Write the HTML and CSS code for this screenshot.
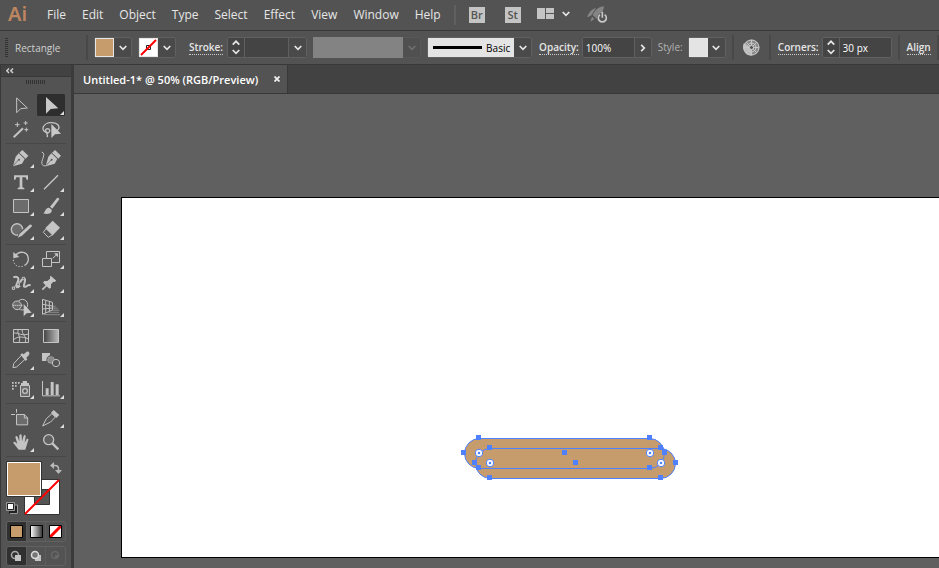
FILE: index.html
```html
<!DOCTYPE html>
<html lang="en">
<head>
<meta charset="utf-8">
<title>Untitled-1* @ 50% (RGB/Preview)</title>
<link rel="stylesheet" href="styles.css">
</head>
<body>
<svg class="defs" aria-hidden="true">
  <symbol id="down" viewBox="0 0 8 6"><path d="M.7 1 4 4.3 7.3 1" fill="none" stroke="currentColor" stroke-width="1.7"/></symbol>
  <symbol id="up" viewBox="0 0 8 6"><path d="M.7 4.6 4 1.3l3.3 3.3" fill="none" stroke="currentColor" stroke-width="1.7"/></symbol>
  <symbol id="next" viewBox="0 0 6 8"><path d="M1.2.8 4.3 4 1.2 7.2" fill="none" stroke="currentColor" stroke-width="1.7"/></symbol>
</svg>

<header class="menubar">
  <span class="brand">Ai</span>
  <nav class="menus">
    <button>File</button><button>Edit</button><button>Object</button><button>Type</button><button>Select</button><button>Effect</button><button>View</button><button>Window</button><button>Help</button>
  </nav>
  <div class="apps">
    <button class="app">Br</button>
    <button class="app">St</button>
    <button class="arrange" aria-label="Arrange documents">
      <svg width="17" height="11" viewBox="0 0 17 11" fill="#c4c4c4"><path d="M0 0h8v11H0zM9 0h8v5H9zM9 6h8v5H9z"/></svg>
      <svg width="8" height="6"><use href="#down"/></svg>
    </button>
    <button class="gpu" aria-label="GPU performance">
      <svg width="21" height="18" viewBox="0 0 63 54"><path d="M51 1C36 2 24 12 17 27l14 13c10-8 18-22 20-39z" fill="#858585"/><path d="M27 6C13 10 5 20 0 34l12-5zM15 32l-5 15 12-8z" fill="#858585"/><circle cx="46" cy="36" r="16" fill="#535353"/><path d="M39 26a12 12 0 1 0 14 0M46 18v17" fill="none" stroke="#c8c8c8" stroke-width="5"/></svg>
    </button>
  </div>
</header>

<section class="controls" aria-label="Control bar">
  <span class="grip"></span>
  <span class="object-type">Rectangle</span>
  <span class="divider"></span>
  <div class="combo fill-combo">
    <button class="swatch tan" aria-label="Fill"></button>
    <button class="chev" aria-label="Fill options"><svg width="8" height="6"><use href="#down"/></svg></button>
  </div>
  <div class="combo">
    <button class="swatch" aria-label="Stroke colour"><svg width="19" height="19" viewBox="0 0 19 19"><path fill="#fff" d="M0 0h19v19H0z"/><path d="M7.500 7.500h4v4h-4z" fill="none" stroke="#222"/><path d="M2 17 17 2" stroke="#f00" stroke-width="2"/></svg></button>
    <button class="chev" aria-label="Stroke colour options"><svg width="8" height="6"><use href="#down"/></svg></button>
  </div>
  <label class="link stroke-label" for="weight">Stroke:</label>
  <div class="combo">
    <button class="spin" aria-label="Step stroke weight"><svg width="8" height="6"><use href="#up"/></svg><svg width="8" height="6"><use href="#down"/></svg></button>
    <input id="weight" class="weight" type="text">
    <button class="chev" aria-label="Weight presets"><svg width="8" height="6"><use href="#down"/></svg></button>
  </div>
  <div class="combo disabled">
    <span class="profile"></span>
    <button class="chev" disabled aria-label="Width profile"><svg width="8" height="6"><use href="#down"/></svg></button>
  </div>
  <div class="combo brush">
    <span class="brush-line"></span>
    <select aria-label="Brush definition"><option>Basic</option></select>
    <span class="chev"><svg width="8" height="6"><use href="#down"/></svg></span>
  </div>
  <label class="link opacity-label" for="opacity">Opacity:</label>
  <div class="combo">
    <input id="opacity" class="value" type="text" value="100%">
    <button class="chev" aria-label="Opacity slider"><svg width="6" height="8"><use href="#next"/></svg></button>
  </div>
  <span class="style-label">Style:</span>
  <div class="combo">
    <button class="swatch pale" aria-label="Graphic style"></button>
    <button class="chev" aria-label="Style options"><svg width="8" height="6"><use href="#down"/></svg></button>
  </div>
  <span class="divider"></span>
  <button class="recolor" aria-label="Recolor artwork"><svg width="17" height="17" viewBox="0 0 17 17"><circle cx="8.500" cy="8.500" r="8" fill="#888"/><path d="M8.500 8.500 1 12a8 8 0 0 0 8 4.500zM8.500 8.500 1 4a8 8 0 0 0 0 8z" fill="#bbb"/><g fill="none" stroke="#c8c8c8"><circle cx="8.500" cy="8.500" r="7.500"/><circle cx="8.500" cy="8.500" r="4.500"/><path d="M8.500 1v15M1 8.500h15M3.200 3.200l10.600 10.600M13.800 3.200 3.200 13.800"/></g><circle cx="8.500" cy="8.500" r="2" fill="#555" stroke="#ccc"/></svg></button>
  <span class="divider"></span>
  <label class="link corners-label" for="corners">Corners:</label>
  <div class="combo">
    <button class="spin" aria-label="Step corner radius"><svg width="8" height="6"><use href="#up"/></svg><svg width="8" height="6"><use href="#down"/></svg></button>
    <input id="corners" class="value" type="text" value="30 px">
  </div>
  <span class="divider"></span>
  <button class="link align">Align</button>
  <span class="divider"></span>
</section>

<main class="workspace">
  <aside class="panel">
    <button class="collapse" aria-label="Collapse panel"><svg width="8" height="6" viewBox="0 0 8 6" fill="none" stroke="#d0d0d0" stroke-width="1.500"><path d="M3 .5.800 2.800 3 5M7 .5 4.800 2.800 7 5"/></svg></button>
    <div class="panel-grip"></div>

    <div class="tools">
      <button class="tool" aria-label="Selection"><svg viewBox="21 99 84 72"><path d="M50 114v44l12-12 20-2z" fill="none" stroke="#c4c4c4" stroke-width="3"/></svg></button>
      <button class="tool more active" aria-label="Direct selection"><svg viewBox="111 99 84 72"><path d="M138 111v50l14-14 23-2z" fill="#c8c8c8"/></svg></button>
      <button class="tool" aria-label="Magic wand"><svg viewBox="21 171 84 72"><path d="m41 232 28-27" stroke="#c4c4c4" stroke-width="6"/><path d="M52 187v14M45 194h14M77 183v12M71 189h12M79 203v12M73 209h12" stroke="#c4c4c4" stroke-width="3"/></svg></button>
      <button class="tool" aria-label="Lasso"><svg viewBox="111 171 84 72"><path d="M146 219c-30-3-17-32 8-31 24 1 29 16 15 25M137 215c-5-8 10-13 12-4 1 10-13 8-12 0 1 10 9 13 4 20" fill="none" stroke="#c4c4c4" stroke-width="4"/><path d="M154 192v42l11-11 18-2z" fill="#c8c8c8"/></svg></button>
    </div>
    <div class="tools">
      <button class="tool more" aria-label="Pen"><svg viewBox="21 258 84 72"><path d="m67 270 18 17-8 9-19-18z" fill="#c4c4c4"/><path d="m56 280 18 17-8 14-27 8 8-29z" fill="#c4c4c4"/><path d="m40 317 15-17" stroke="#555" stroke-width="2"/><circle cx="57" cy="299" r="3" fill="#555"/></svg></button>
      <button class="tool" aria-label="Curvature"><svg viewBox="111 258 84 72"><path d="m165 270 18 17-8 9-19-18z" fill="#c4c4c4"/><path d="m154 280 18 17-8 14-27 8 8-29z" fill="#c4c4c4"/><path d="m138 317 15-17" stroke="#555" stroke-width="2"/><circle cx="155" cy="299" r="3" fill="#555"/><path d="M125 276c17 5-6 29 2 38 3 4 8 4 12 3" fill="none" stroke="#c4c4c4" stroke-width="3"/></svg></button>
      <button class="tool more" aria-label="Type"><svg viewBox="21 330 84 72"><path d="M42 346h42v13h-4l-3-7H67v30l6 2v4H53v-4l6-2v-30H49l-3 7h-4z" fill="#c4c4c4"/></svg></button>
      <button class="tool more" aria-label="Line segment"><svg viewBox="111 330 84 72"><path d="m132 388 42-42" stroke="#c4c4c4" stroke-width="4"/></svg></button>
      <button class="tool more" aria-label="Rectangle"><svg viewBox="21 -3 84 72"><path d="M40.500 13.500h45v39h-45z" fill="#6c6c6c" stroke="#c4c4c4" stroke-width="3"/></svg></button>
      <button class="tool more" aria-label="Paintbrush"><svg viewBox="111 -3 84 72"><path d="m150 35 21-26q6-2 7 4l-21 28zM146 38c7 2 12 7 8 13-4 7-15 7-25 4 7-3 6-16 17-17z" fill="#c4c4c4"/></svg></button>
      <button class="tool more" aria-label="Shaper"><svg viewBox="21 69 84 72"><path d="M54 120a17 17 0 1 1 14-17" fill="#6c6c6c" stroke="#c4c4c4" stroke-width="4"/><path d="m59 116 30-27q7-2 7 5l-30 28-13 6z" fill="#c4c4c4"/></svg></button>
      <button class="tool more" aria-label="Eraser"><svg viewBox="111 69 84 72"><path d="m136 99 22-22 22 21-23 24z" fill="#c4c4c4"/><path d="m138 101-8 11 15 15 12-8z" fill="#555" stroke="#c4c4c4" stroke-width="3"/></svg></button>
    </div>
    <div class="tools">
      <button class="tool more" aria-label="Rotate"><svg viewBox="21 156 84 72"><path d="M47 182c10-16 38-13 38 10 0 9-4 15-11 19" fill="none" stroke="#c4c4c4" stroke-width="4"/><path d="m40 171 18 15-18 4z" fill="#c4c4c4"/><path d="M40 194c1 22 23 25 34 17" fill="none" stroke="#c4c4c4" stroke-width="3" stroke-dasharray="4 5"/></svg></button>
      <button class="tool more" aria-label="Scale"><svg viewBox="111 156 84 72"><path d="M139.500 190.500v-21h39v33h-24M127.500 190.500h27v24h-27z" fill="none" stroke="#c4c4c4" stroke-width="3"/><path d="m158 190 13-12" stroke="#c4c4c4" stroke-width="3"/><path d="M162 175h12v12z" fill="#c4c4c4"/></svg></button>
      <button class="tool more" aria-label="Width"><svg viewBox="21 228 84 72"><path d="M40 247c14-6 19 4 12 16-7 13 0 18 8 9M60 263c5-14 17-16 15-6-2 14-8 20 2 18 8-2 6-8 15-4" fill="none" stroke="#c4c4c4" stroke-width="6"/><path d="M40 279 70 250" stroke="#c4c4c4" stroke-width="2"/><g fill="#555" stroke="#c4c4c4" stroke-width="3"><path d="M37 276h7v7h-7zM67 247h7v7h-7zM51 264h7v7h-7z"/></g></svg></button>
      <button class="tool more" aria-label="Puppet warp"><svg viewBox="111 228 84 72"><path d="m152 242 17 15-5 4-4-1-7 8v10l-5 3-19-18 4-5h9l8-7v-5z" fill="#c4c4c4"/><path d="m127 284 17-17" stroke="#c4c4c4" stroke-width="5"/></svg></button>
      <button class="tool more" aria-label="Shape builder"><svg viewBox="21 300 84 72"><circle cx="67" cy="329" r="16" fill="#555" stroke="#c4c4c4" stroke-width="3"/><circle cx="51" cy="331" r="13" fill="#6c6c6c" stroke="#c4c4c4" stroke-width="3"/><path d="M40 331h28" stroke="#eee" stroke-width="3" stroke-dasharray="3 3"/><path d="M71 327v37l9-9 15-2z" fill="#c8c8c8"/></svg></button>
      <button class="tool more" aria-label="Perspective grid"><svg viewBox="111 300 84 72"><path d="M127.500 313v45l30-13v-23zM137 317v37M148 321v28M127 328l30 5M127 342l30-3" fill="none" stroke="#c4c4c4" stroke-width="3"/><path d="M159 334h8M159 340h14" stroke="#777" stroke-width="5"/><path d="M155 346h23M143 352h34M132 359h48" stroke="#888" stroke-width="3"/></svg></button>
    </div>
    <div class="tools">
      <button class="tool" aria-label="Mesh"><svg viewBox="21 12 84 72"><g fill="none" stroke="#c4c4c4" stroke-width="3"><path d="M40.500 28.500h45v39h-45zM57 28c-11 11 8 18 0 39M67 28c-4 15 15 19 9 39M41 39c16-1 24 10 44 3M41 59c12-10 22-10 44-3"/></g></svg></button>
      <button class="tool" aria-label="Gradient"><svg viewBox="111 12 84 72"><defs><linearGradient id="g1"><stop stop-color="#444"/><stop offset="1" stop-color="#bbb"/></linearGradient></defs><path d="M130.500 28.500h45v39h-45z" fill="url(#g1)" stroke="#c4c4c4" stroke-width="3"/></svg></button>
      <button class="tool more" aria-label="Eyedropper"><svg viewBox="21 84 84 72"><path d="m64 106-23 25-2 12 11-2 26-24" fill="#555" stroke="#c4c4c4" stroke-width="3"/><path d="m61 104 5-4 5 3 9-8c8-2 10 5 7 10l-8 8 3 5-5 5z" fill="#c4c4c4"/></svg></button>
      <button class="tool" aria-label="Blend"><svg viewBox="111 84 84 72"><path d="M126 99h24v24h-24z" fill="#c4c4c4"/><circle cx="153" cy="120" r="12" fill="#888" stroke="#555" stroke-width="4"/><circle cx="153" cy="120" r="10" fill="#888" stroke="#aaa" stroke-width="2"/><circle cx="168" cy="129" r="11" fill="#555" stroke="#c4c4c4" stroke-width="3"/></svg></button>
    </div>
    <div class="tools">
      <button class="tool more" aria-label="Symbol sprayer"><svg viewBox="21 171 84 72"><path d="M61.500 196.500h27v33h-27z" fill="#6c6c6c" stroke="#c4c4c4" stroke-width="3"/><path d="M68 183h13v6h6v9H63v-9h5z" fill="#c4c4c4"/><circle cx="75" cy="213" r="7" fill="#555" stroke="#c4c4c4" stroke-width="4"/><path d="M36 188.500h26M36 197.500h17M36 206.500h8" stroke="#c4c4c4" stroke-width="5" stroke-dasharray="5 4"/></svg></button>
      <button class="tool more" aria-label="Column graph"><svg viewBox="111 171 84 72"><path d="M127.500 183v44.500H180" fill="none" stroke="#c4c4c4" stroke-width="3"/><path d="M137 205h9v20h-9zM152 186h9v39h-9zM167 193h9v32h-9z" fill="#c4c4c4"/></svg></button>
    </div>
    <div class="tools">
      <button class="tool" aria-label="Artboard"><svg viewBox="21 258 84 72"><path d="M49.500 283.500H73l10 10v21H49.500z" fill="#6c6c6c" stroke="#c4c4c4" stroke-width="3"/><path d="M49.500 267v11M33 283.500h12M73 283v11h11" stroke="#c4c4c4" stroke-width="3" fill="none"/></svg></button>
      <button class="tool more" aria-label="Slice"><svg viewBox="111 258 84 72"><path d="m156 281-17 15-11 22 24-12 14-15z" fill="#555" stroke="#c4c4c4" stroke-width="3"/><path d="m153 278 8-8 17 15-9 9z" fill="#c4c4c4"/></svg></button>
      <button class="tool more" aria-label="Hand"><svg viewBox="21 330 84 72"><path d="M56 389 40 369c0-6 5-5 12 3l-6-21c1-4 5-4 7 0l5 13v-18c2-5 6-4 7 0l1 18 5-17c3-4 6-2 6 2l-3 19 6-11c3-2 6 0 5 3l-9 29z" fill="#c4c4c4"/></svg></button>
      <button class="tool" aria-label="Zoom"><svg viewBox="111 330 84 72"><circle cx="146" cy="359" r="15" fill="#606060" stroke="#c4c4c4" stroke-width="4"/><path d="m157 370 18 18" stroke="#c4c4c4" stroke-width="7"/></svg></button>
    </div>

    <div class="paint">
      <svg width="60" height="56" viewBox="0 0 60 56" role="img" aria-label="Fill and stroke">
        <path d="M18.500 18.500h35v35h-35z" fill="#fff" stroke="#333"/><path d="M28.500 28.500h15v15h-15z" fill="#555" stroke="#333"/>
        <path d="m19 53 34-34" stroke="#f00" stroke-width="2"/>
        <path d="M.5.5h35v35H.5z" fill="#c69c6d" stroke="#333"/><path d="M1.500 1.500h33v33h-33z" fill="none" stroke="#fff"/>
        <path d="M47 4.500h2q3.500 0 3.500 3.500v2" fill="none" stroke="#b8b8b8" stroke-width="1.500"/><path d="m48 1-4 3.500L48 8zM49 9h7l-3.500 4z" fill="#b8b8b8"/>
        <path d="M4.500 45.500h6v6h-6z" fill="none" stroke="#222" stroke-width="3"/><path d="M9 44h2.500v8.500H4" fill="none" stroke="#999"/><path d="M1.500 42.500h6v6h-6z" fill="#fff" stroke="#222"/><path d="M.5 41.500h8v8h-8z" fill="none" stroke="#999"/>
      </svg>
    </div>
    <div class="modes">
      <button class="on" aria-label="Color"><svg width="13" height="13"><path d="M.5.5h12v12H.5z" fill="#c69c6d" stroke="#000"/></svg></button>
      <button aria-label="Gradient fill"><svg width="13" height="13"><defs><linearGradient id="g2"><stop stop-color="#fff"/><stop offset="1" stop-color="#333"/></linearGradient></defs><path d="M.5.5h12v12H.5z" fill="url(#g2)" stroke="#000"/></svg></button>
      <button aria-label="None"><svg width="13" height="13"><path d="M.5.5h12v12H.5z" fill="#fff"/><path d="M1 12 12 1" stroke="#f00" stroke-width="3"/><path d="M.5.5h12v12H.5z" fill="none" stroke="#000"/></svg></button>
    </div>
    <div class="modes draw">
      <button class="on" aria-label="Draw normal"><svg width="12" height="12"><circle cx="5" cy="5" r="3.500" fill="none" stroke="#aaa" stroke-width="1.500"/><path d="M5 5h6v6H5z" fill="#c4c4c4"/></svg></button>
      <button aria-label="Draw behind"><svg width="12" height="12"><path d="M5 5h6v6H5z" fill="#c4c4c4"/><circle cx="5" cy="5" r="3.500" fill="#777" stroke="#ddd" stroke-width="1.500"/></svg></button>
      <button disabled aria-label="Draw inside"><svg width="12" height="12"><circle cx="5" cy="5" r="3.500" fill="none" stroke="#686868" stroke-width="1.500"/><path d="M5 5h3v3H5z" fill="#686868"/></svg></button>
    </div>
  </aside>

  <section class="document">
    <div class="tabs">
      <div class="tab"><span>Untitled-1* @ 50% (RGB/Preview)</span><button aria-label="Close"><svg width="6" height="6" viewBox="0 0 6 6"><path d="m.5.5 5 5M5.500.5l-5 5" stroke="#eee" stroke-width="1.800"/></svg></button></div>
    </div>
    <div class="canvas">
      <div class="artboard">
        <svg class="shapes" width="220" height="48" viewBox="460 434 220 48" role="img" aria-label="Two selected rounded rectangles">
          <g fill="#c69c6d"><rect x="464.500" y="438.500" width="200" height="30" rx="15"/><rect x="475.500" y="448.500" width="200" height="30" rx="15"/></g>
          <g fill="none" stroke="#4f80ff"><rect x="464.500" y="438.500" width="200" height="30" rx="15"/><rect x="475.500" y="448.500" width="200" height="30" rx="15"/></g>
          <path fill="#4f80ff" d="M476 435h5v5h-5zM647 435h5v5h-5zM461 450h5v5h-5zM662 450h5v5h-5zM476 465h5v5h-5zM647 465h5v5h-5zM562 450h5v5h-5zM487 445h5v5h-5zM658 445h5v5h-5zM472 460h5v5h-5zM673 460h5v5h-5zM487 475h5v5h-5zM658 475h5v5h-5zM573 460h5v5h-5z"/>
          <g fill="#fff" stroke="#4f80ff"><circle cx="479" cy="453" r="3.700"/><circle cx="650" cy="453" r="3.700"/><circle cx="490" cy="463" r="3.700"/><circle cx="661" cy="463" r="3.700"/></g>
          <g fill="#4f80ff"><circle cx="479" cy="453" r="1.300"/><circle cx="650" cy="453" r="1.300"/><circle cx="490" cy="463" r="1.300"/><circle cx="661" cy="463" r="1.300"/></g>
        </svg>
      </div>
    </div>
  </section>
</main>
</body>
</html>
```
FILE: styles.css
```css
* { box-sizing: border-box; }

body {
  margin: 0;
  height: 100vh;
  display: flex;
  flex-direction: column;
  overflow: hidden;
  background: #535353;
  color: #e6e6e6;
  font-family: "Open Sans", "Noto Sans", sans-serif;
  font-size: 10px;
}

button, input, select {
  margin: 0;
  padding: 0;
  border: 0;
  background: none;
  color: inherit;
  font: inherit;
}

svg { display: block; flex: none; }
.defs { position: absolute; width: 0; height: 0; }

/* Menu bar */
.menubar {
  flex: none;
  display: flex;
  align-items: center;
  height: 31px;
  padding-left: 8px;
  border-bottom: 1px solid #383838;
}
.brand {
  width: 39px;
  color: #bd8560;
  font: 600 20px/28px "Noto Sans", sans-serif;
  padding-bottom: 2px;
}
.menus { display: flex; gap: 16px; font-size: 12px; line-height: 18px; }
.apps {
  display: flex;
  align-items: center;
  height: 20px;
  margin-left: 13px;
  padding-left: 13px;
  border-left: 2px solid #606060;
}
.app {
  width: 16px;
  height: 16px;
  margin-right: 20px;
  background: #c4c4c4;
  color: #535353;
  font-weight: 600;
  font-size: 11px;
  line-height: 16px;
}
.arrange { display: flex; align-items: center; gap: 8px; margin: -3px 0 0 -4px; }
.gpu { margin-left: 17px; }

/* Control bar */
.controls {
  flex: none;
  display: flex;
  align-items: center;
  height: 34px;
  padding-left: 5px;
  border-bottom: 1px solid #383838;
  white-space: nowrap;
}
.controls > * { flex: none; }
.grip {
  width: 3px;
  height: 19px;
  margin-right: 7px;
  background: repeating-linear-gradient(#333 0 1px, transparent 1px 2px);
}
.object-type { width: 71px; color: #d0d0d0; }
.divider { width: 2px; height: 25px; background: #484848; }
.combo {
  display: flex;
  height: 21px;
  border: 1px solid #606060;
  border-radius: 2px;
  background: #444;
  margin-right: 6px;
}
.fill-combo { margin-left: 6px; }
.swatch { width: 19px; height: 19px; border: 1px solid #e6e6e6; background: #fff; overflow: hidden; }
.swatch svg { margin: -1px; }
.tan { background: #c69c6d; }
.pale { background: #e4e4e4; }
.chev { display: flex; align-items: center; justify-content: center; width: 17px; background: #4a4a4a; }
.spin { display: flex; flex-direction: column; align-items: center; justify-content: center; gap: 3px; width: 17px; border-right: 1px solid #606060; }
.link, .style-label { font-weight: 600; line-height: 13px; }
.link { border-bottom: 1px dotted #ccc; }
.stroke-label { margin: 0 4px 0 7px; }
.weight { width: 44px; border-right: 1px solid #606060; }
.profile { width: 90px; background: #838383; }
.disabled { border-color: #585858; color: #707070; }
.disabled .profile { margin: -1px 0 -1px -1px; }
.disabled .chev { background: #505050; }
.brush-line { width: 56px; background: linear-gradient(#000, #000) 5px 8px / 49px 3px no-repeat #e4e4e4; }
.brush select { width: 30px; appearance: none; background: #e4e4e4; color: #000; border-radius: 0; padding-left: 2px; }
.opacity-label { margin: 0 3px 0 1px; }
.value { width: 51px; padding-left: 3px; color: #fff; }
.value + .chev { border-left: 1px solid #606060; }
.style-label { width: 30px; color: #b4b4b4; font-weight: 400; }
.recolor { margin: 0 9px; }
.corners-label { margin: 0 3px 0 7px; }
.align { margin: 0 6px 0 7px; }

/* Workspace */
.workspace { flex: 1; display: flex; min-height: 0; }
.panel { flex: none; width: 74px; border-left: 1px solid #383838; border-right: 3px solid #3b3b3b; padding-left: 5px; }
.collapse { display: flex; align-items: center; width: 70px; height: 12px; margin-left: -5px; padding-left: 5px; background: #424242; border-bottom: 1px solid #383838; }
.panel-grip { width: 20px; height: 4px; margin: 3px 0 9px 20px; background: repeating-linear-gradient(90deg, #333 0 1px, transparent 1px 2px); }
.tools { display: grid; grid-template-columns: 28px 28px; grid-auto-rows: 24px; column-gap: 2px; width: 60px; padding: 0 1px 2px; margin-bottom: 2px; border-bottom: 1px solid #474747; }
.tool { position: relative; border-radius: 3px; }
.tool svg { width: 28px; height: 24px; }
.active { background: linear-gradient(#2e2e2e, #2e2e2e) 0 1px / 28px 22px no-repeat; }
.more::after { content: ""; position: absolute; right: 1px; bottom: 2px; border-bottom: 4px solid #ddd; border-left: 4px solid transparent; }
.paint { padding-top: 2px; height: 60px; }
.modes { display: flex; width: 60px; height: 21px; margin: 2px 0 4px; border: 1px solid #616161; border-radius: 3px; overflow: hidden; }
.modes button { flex: 1; display: flex; align-items: center; justify-content: center; border-right: 1px solid #5c5c5c; }
.modes button:last-child { border-right: 0; }
.modes .on { background: #303030; }
.draw { height: 20px; margin-bottom: 0; }

.document { flex: 1; min-width: 0; display: flex; flex-direction: column; }
.tabs { flex: none; display: flex; height: 29px; background: #424242; border-bottom: 1px solid #383838; }
.tab { display: flex; align-items: center; gap: 16px; padding: 0 7px 0 9px; background: #535353; border-right: 1px solid #383838; color: #fff; font-size: 11px; font-weight: 600; }
.canvas { flex: 1; display: flex; background: #606060; padding: 103px 0 10px 47px; }
.artboard { position: relative; flex: 1; background: #fff; border: 1px solid #000; border-right: 0; }
.shapes { position: absolute; left: 338px; top: 236px; }
```
